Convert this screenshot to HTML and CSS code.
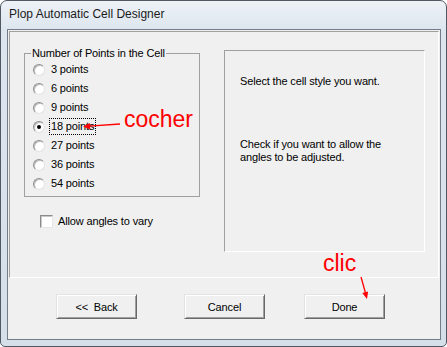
FILE: index.html
```html
<!DOCTYPE html>
<html lang="en">
<head>
  <meta charset="UTF-8" />
  <title>Plop Automatic Cell Designer</title>
  <link rel="stylesheet" href="styles.css">
</head>
<body>
  <div class="window">
    <div class="titlebar">Plop Automatic Cell Designer</div>
    <div class="client">
      <div class="panel">
        <div class="left-col">
          <fieldset class="group">
            <legend>Number of Points in the Cell</legend>
            <div class="radio-row"><span class="radio"></span><span class="opt">3 points</span></div>
            <div class="radio-row"><span class="radio"></span><span class="opt">6 points</span></div>
            <div class="radio-row"><span class="radio"></span><span class="opt">9 points</span></div>
            <div class="radio-row"><span class="radio checked"></span><span class="opt focus">18 points</span></div>
            <div class="radio-row"><span class="radio"></span><span class="opt">27 points</span></div>
            <div class="radio-row"><span class="radio"></span><span class="opt">36 points</span></div>
            <div class="radio-row"><span class="radio"></span><span class="opt">54 points</span></div>
          </fieldset>
          <div class="check-row"><span class="checkbox"></span><span>Allow angles to vary</span></div>
        </div>
        <div class="help">
          <p class="help-first">Select the cell style you want.</p>
          <p class="help-second">Check if you want to allow the<br>angles to be adjusted.</p>
        </div>
      </div>
      <div class="footer">
        <button class="btn btn-back">&lt;&lt;&nbsp; Back</button>
        <button class="btn btn-cancel">Cancel</button>
        <button class="btn btn-done">Done</button>
      </div>
    </div>
  </div>

  <!-- annotations drawn over the dialog -->
  <svg class="notes" width="447" height="347" viewBox="0 0 447 347">
    <text x="124" y="127" class="note">cocher</text>
    <line x1="120" y1="124" x2="89" y2="126.2" stroke="#f00" stroke-width="1.3" />
    <polygon points="83,126.5 90.2,129.5 89.8,123" fill="#f00" />
    <text x="323" y="271" class="note">clic</text>
    <line x1="361" y1="277" x2="365.5" y2="293" stroke="#f00" stroke-width="1.3" />
    <polygon points="367,299 368.1,291.4 362.3,293" fill="#f00" />
  </svg>
</body>
</html>
```

FILE: styles.css
```css
body {
  margin: 0;
  width: 447px;
  height: 347px;
  overflow: hidden;
  position: relative;
  background: #fff;
  font-family: "Liberation Sans", Arial, sans-serif;
  font-size: 11px;
  letter-spacing: -0.15px;
  color: #000;
}
.window {
  box-sizing: border-box;
  width: 447px;
  height: 347px;
  border: 1px solid #4f5863;
  border-radius: 7px 7px 5px 5px;
  background: linear-gradient(to bottom, #eef2f7 0, #dde6ef 28px, #d5dfe9 100%);
  display: flex;
  flex-direction: column;
  padding: 0 5px 6px 6px;
}
.titlebar {
  height: 28px;
  line-height: 26px;
  padding-left: 2px;
  font-size: 12px;
  letter-spacing: 0;
  color: #1b1b1b;
}
.client {
  flex: 1;
  display: flex;
  flex-direction: column;
  border: 1px solid #737d89;
  background: #f0f0f0;
}
.panel {
  box-sizing: border-box;
  height: 247px;
  margin: 1px 1px 0 1px;
  border: 1px solid;
  border-color: #a0a0a0 #fff #fff #a0a0a0;
  padding: 15px 0 0 14px;
  display: flex;
}
.left-col {
  display: flex;
  flex-direction: column;
}
.group {
  box-sizing: border-box;
  width: 176px;
  margin: 0;
  padding: 0 0 3px 6px;
  border: 1px solid #a0a0a0;
}
.group legend {
  padding: 0 1px;
  line-height: 13px;
}
.radio-row {
  height: 19px;
  display: flex;
  align-items: center;
}
.radio {
  box-sizing: border-box;
  width: 12px;
  height: 12px;
  margin-left: 2px;
  border-radius: 50%;
  border: 1px solid;
  border-color: #8f8f8f #e2e2e2 #e2e2e2 #8f8f8f;
  background: #fff;
  box-shadow: inset 1px 1px 0 #bdbdbd;
  display: flex;
  align-items: center;
  justify-content: center;
}
.radio.checked::after {
  content: "";
  width: 4px;
  height: 4px;
  border-radius: 50%;
  background: #000;
}
.opt {
  margin-left: 4px;
  padding: 1px;
  line-height: 13px;
  border: 1px dotted transparent;
}
.opt.focus {
  border-color: #000;
}
.check-row {
  margin: 18px 0 0 16px;
  display: flex;
  align-items: center;
  line-height: 13px;
}
.checkbox {
  box-sizing: border-box;
  width: 13px;
  height: 13px;
  margin-right: 5px;
  border: 1px solid;
  border-color: #8c8c8c #e6e6e6 #e6e6e6 #8c8c8c;
  background: #fff;
  box-shadow: inset 1px 1px 0 #c8c8c8;
}
.help {
  box-sizing: border-box;
  width: 201px;
  height: 202px;
  margin: 3px 0 0 24px;
  border: 1px solid;
  border-color: #a0a0a0 #fff #fff #a0a0a0;
  padding: 24px 8px 0 15px;
  line-height: 13px;
}
.help p {
  margin: 0;
}
.help-second {
  margin-top: 50px !important;
}
.footer {
  flex: 1;
  display: flex;
  align-items: flex-start;
  padding: 16px 0 0 48px;
}
.btn {
  box-sizing: border-box;
  width: 81px;
  height: 25px;
  padding: 0;
  font-family: inherit;
  font-size: 11px;
  letter-spacing: -0.15px;
  color: #000;
  background: #f0f0f0;
  border: 1px solid;
  border-color: #e3e3e3 #696969 #696969 #e3e3e3;
  box-shadow: inset 1px 1px 0 #fff, inset -1px -1px 0 #a0a0a0;
}
.btn-cancel {
  margin-left: 47px;
}
.btn-done {
  margin-left: 39px;
}
.notes {
  position: absolute;
  top: 0;
  left: 0;
  pointer-events: none;
}
.note {
  font-family: "Liberation Sans", Arial, sans-serif;
  font-size: 23px;
  letter-spacing: 0;
  fill: #f00;
}
```
